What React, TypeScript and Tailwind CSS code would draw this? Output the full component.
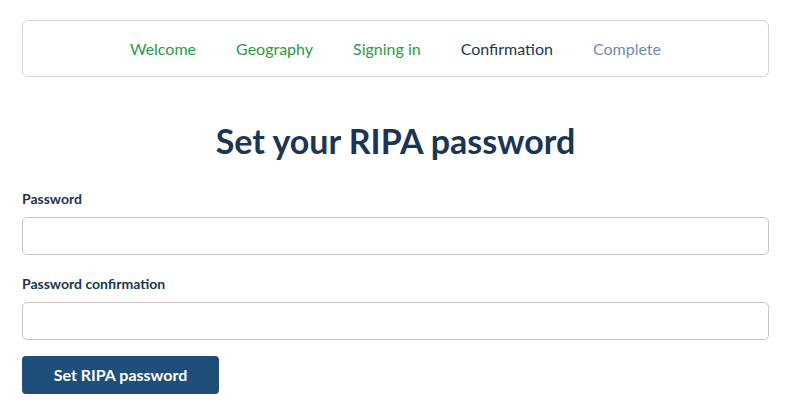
import React from "react";

export default function App() {
  const font = { fontFamily: "Lato, 'Noto Sans', sans-serif" };
  return (
    <div className="min-h-[417px] bg-white pl-[22px] pr-[20px] pt-[20px]" style={font}>
      <nav className="flex h-[57px] items-center justify-center gap-[40px] rounded-[6px] border border-[#d3d3d3] pt-[1px] text-[16px]">
        <span className="text-[#2a9a45]">Welcome</span>
        <span className="text-[#2a9a45]">Geography</span>
        <span className="text-[#2a9a45]">Signing in</span>
        <span className="text-[#1b3654]">Confirmation</span>
        <span className="text-[#6c8db1]">Complete</span>
      </nav>
      <h1 className="mt-[41px] text-center text-[34px] font-bold leading-[46px] text-[#1b3654]">
        Set your RIPA password
      </h1>
      <form className="mt-[25px] flex flex-col">
        <label className="text-[14px] font-bold leading-[20px] text-[#1b3654]">Password</label>
        <input
          type="password"
          className="mt-[8px] h-[38px] w-full rounded-[5px] border border-[#c4c4c4] bg-white"
        />
        <label className="mt-[19px] text-[14px] font-bold leading-[20px] text-[#1b3654]">
          Password confirmation
        </label>
        <input
          type="password"
          className="mt-[8px] h-[38px] w-full rounded-[5px] border border-[#c4c4c4] bg-white"
        />
        <button
          type="button"
          className="mt-[16px] h-[38px] w-[197px] rounded-[4px] bg-[#1f4e7b] text-[16px] font-bold text-white"
        >
          Set RIPA password
        </button>
      </form>
    </div>
  );
}
